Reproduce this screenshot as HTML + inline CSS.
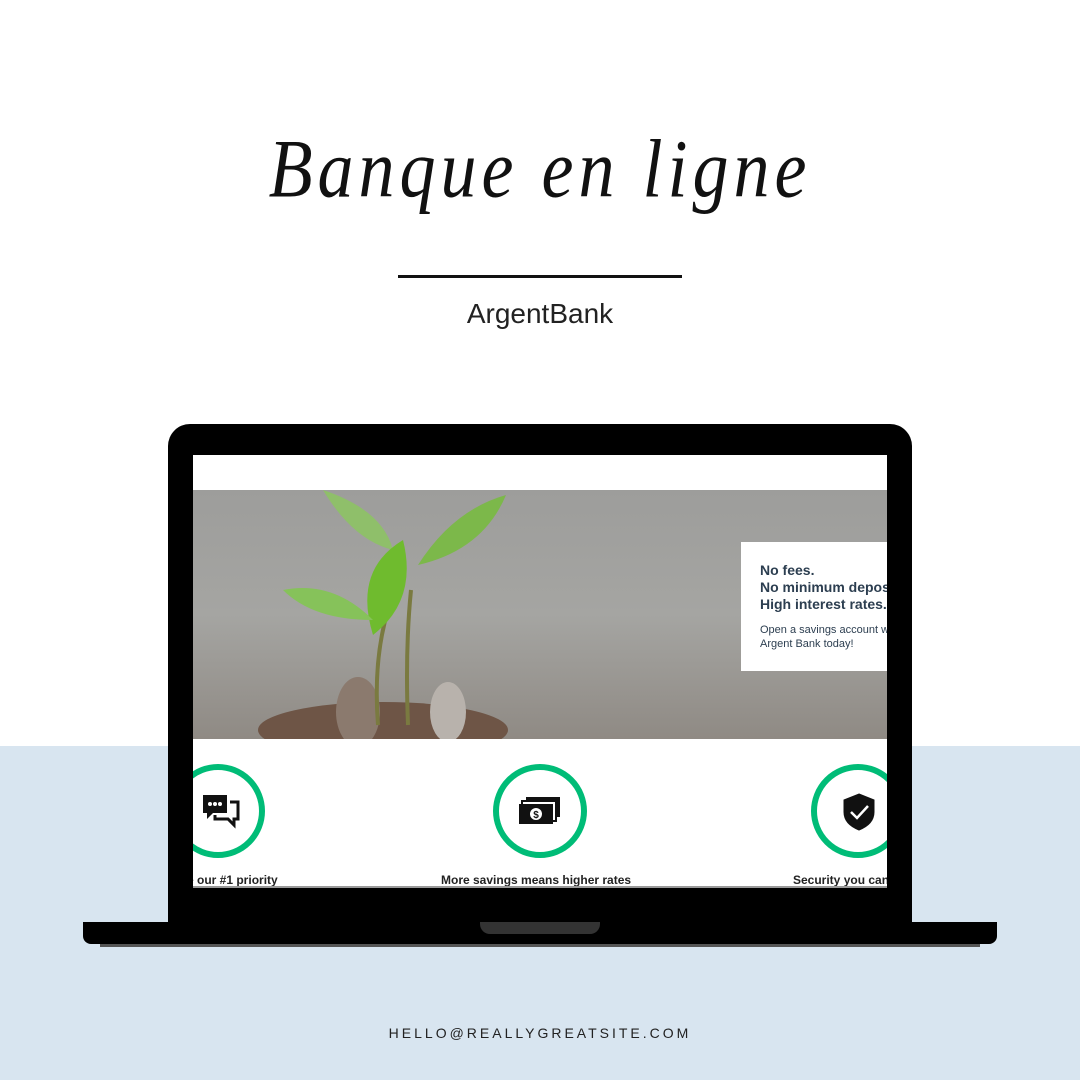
<!DOCTYPE html>
<html><head><meta charset="utf-8"><style>
*{margin:0;padding:0;box-sizing:border-box}
body{width:1080px;height:1080px;position:relative;background:#fff;overflow:hidden;font-family:"Liberation Sans",sans-serif}
.blue{position:absolute;left:0;top:746px;width:1080px;height:334px;background:#d8e5f0}
.title{position:absolute;left:0;width:1080px;top:128px;text-align:center;font-family:"Liberation Serif",serif;font-style:italic;font-size:72px;color:#111;letter-spacing:5px;font-weight:normal;transform:scaleY(1.15)}
.rule{position:absolute;left:398px;top:275px;width:284px;height:3px;background:#111}
.sub{position:absolute;left:0;width:1080px;top:298px;text-align:center;font-size:28px;color:#222}
.lap{position:absolute;left:168px;top:424px;width:744px;height:505px;background:#000;border-radius:22px 22px 0 0}
.scr{position:absolute;left:193px;top:455px;width:694px;height:433px;background:#fff;overflow:hidden}
.hero{position:absolute;left:0;top:35px;width:694px;height:249px;background:linear-gradient(180deg,#9d9d9b,#a5a5a2 50%,#8f8a84);overflow:hidden}
.card{position:absolute;left:548px;top:52px;width:160px;height:129px;background:#fff;padding:20px 0 0 19px;color:#2c3e50;white-space:nowrap}
.card b{display:block;font-size:14px;line-height:17px}
.card p{font-size:11px;line-height:14px;margin-top:10px;color:#2c3e50}
.circ{position:absolute;top:309px;width:94px;height:94px;border:6px solid #00bc77;border-radius:50%}
.lbl{position:absolute;top:418px;font-size:12px;font-weight:bold;color:#222;white-space:nowrap}
.base{position:absolute;left:83px;top:922px;width:914px;height:22px;background:#000;border-radius:0 0 8px 8px}
.notch{position:absolute;left:480px;top:922px;width:120px;height:12px;background:#333;border-radius:0 0 10px 10px}
.shadow{position:absolute;left:100px;top:944px;width:880px;height:3px;background:#555}
.mail{position:absolute;left:0;width:1080px;top:1025px;text-align:center;font-size:14px;letter-spacing:3px;color:#222}
</style></head><body>
<div class="blue"></div>
<div class="title">Banque en ligne</div>
<div class="rule"></div>
<div class="sub">ArgentBank</div>
<div class="lap"></div>
<div class="scr">
 <div class="hero">
  <svg width="694" height="249" style="position:absolute;left:0;top:0">
   <ellipse cx="190" cy="240" rx="125" ry="28" fill="#6e5546"/>
   <ellipse cx="165" cy="222" rx="22" ry="35" fill="#8b7a6e"/>
   <ellipse cx="255" cy="222" rx="18" ry="30" fill="#b8b2ac"/>
   <path d="M185 235 Q180 170 195 120" stroke="#7a7a40" stroke-width="4" fill="none"/>
   <path d="M215 235 Q212 160 218 100" stroke="#7a7a40" stroke-width="4" fill="none"/>
   <path d="M130 0 Q190 20 200 60 Q160 50 130 0Z" fill="#8fbf6a"/>
   <path d="M313 5 Q260 20 225 75 Q290 60 313 5Z" fill="#7cb84a"/>
   <path d="M210 50 Q160 80 180 145 Q225 110 210 50Z" fill="#6fbb2e"/>
   <path d="M90 100 Q140 90 180 130 Q120 130 90 100Z" fill="#86c25a"/>
  </svg>
  <div class="card"><b>No fees.</b><b>No minimum deposit.</b><b>High interest rates.</b><p>Open a savings account with<br>Argent Bank today!</p></div>
 </div>
 <div class="circ" style="left:-22px"></div>
 <svg style="position:absolute;left:8px;top:338px" width="40" height="36" viewBox="0 0 40 36"><path d="M2 2h24v18H12l-6 6v-6H2z" fill="#111"/><circle cx="9" cy="11" r="2" fill="#fff"/><circle cx="14" cy="11" r="2" fill="#fff"/><circle cx="19" cy="11" r="2" fill="#fff"/><path d="M29 9h8v17h-4v6l-6-6H14v-4" stroke="#111" stroke-width="3" fill="none"/></svg>
 <div class="circ" style="left:300px"></div>
 <svg style="position:absolute;left:325px;top:342px" width="44" height="28" viewBox="0 0 44 28"><rect x="8" y="0" width="34" height="20" fill="#111"/><rect x="4" y="4" width="34" height="20" fill="#fff" stroke="#111" stroke-width="2"/><rect x="1" y="7" width="34" height="20" fill="#111"/><circle cx="18" cy="17" r="6" fill="#fff"/><text x="18" y="21" font-size="10" font-weight="bold" text-anchor="middle" fill="#111" font-family="Liberation Sans">$</text></svg>
 <div class="circ" style="left:618px"></div>
 <svg style="position:absolute;left:648px;top:337px" width="36" height="40" viewBox="0 0 36 40"><path d="M18 2 L33 8 V20 Q33 32 18 38 Q3 32 3 20 V8Z" fill="#111" stroke="#111"/><path d="M10 20 L16 26 L27 14" stroke="#fff" stroke-width="2.5" fill="none"/></svg>
 <div class="lbl" style="left:-6px">e our #1 priority</div>
 <div class="lbl" style="left:248px">More savings means higher rates</div>
 <div class="lbl" style="left:600px">Security you can trust</div>
 <div style="position:absolute;left:0;top:431px;width:694px;height:2px;background:#999"></div>
</div>
<div class="base"></div>
<div class="notch"></div>
<div class="shadow"></div>
<div class="mail">HELLO@REALLYGREATSITE.COM</div>
</body></html>
